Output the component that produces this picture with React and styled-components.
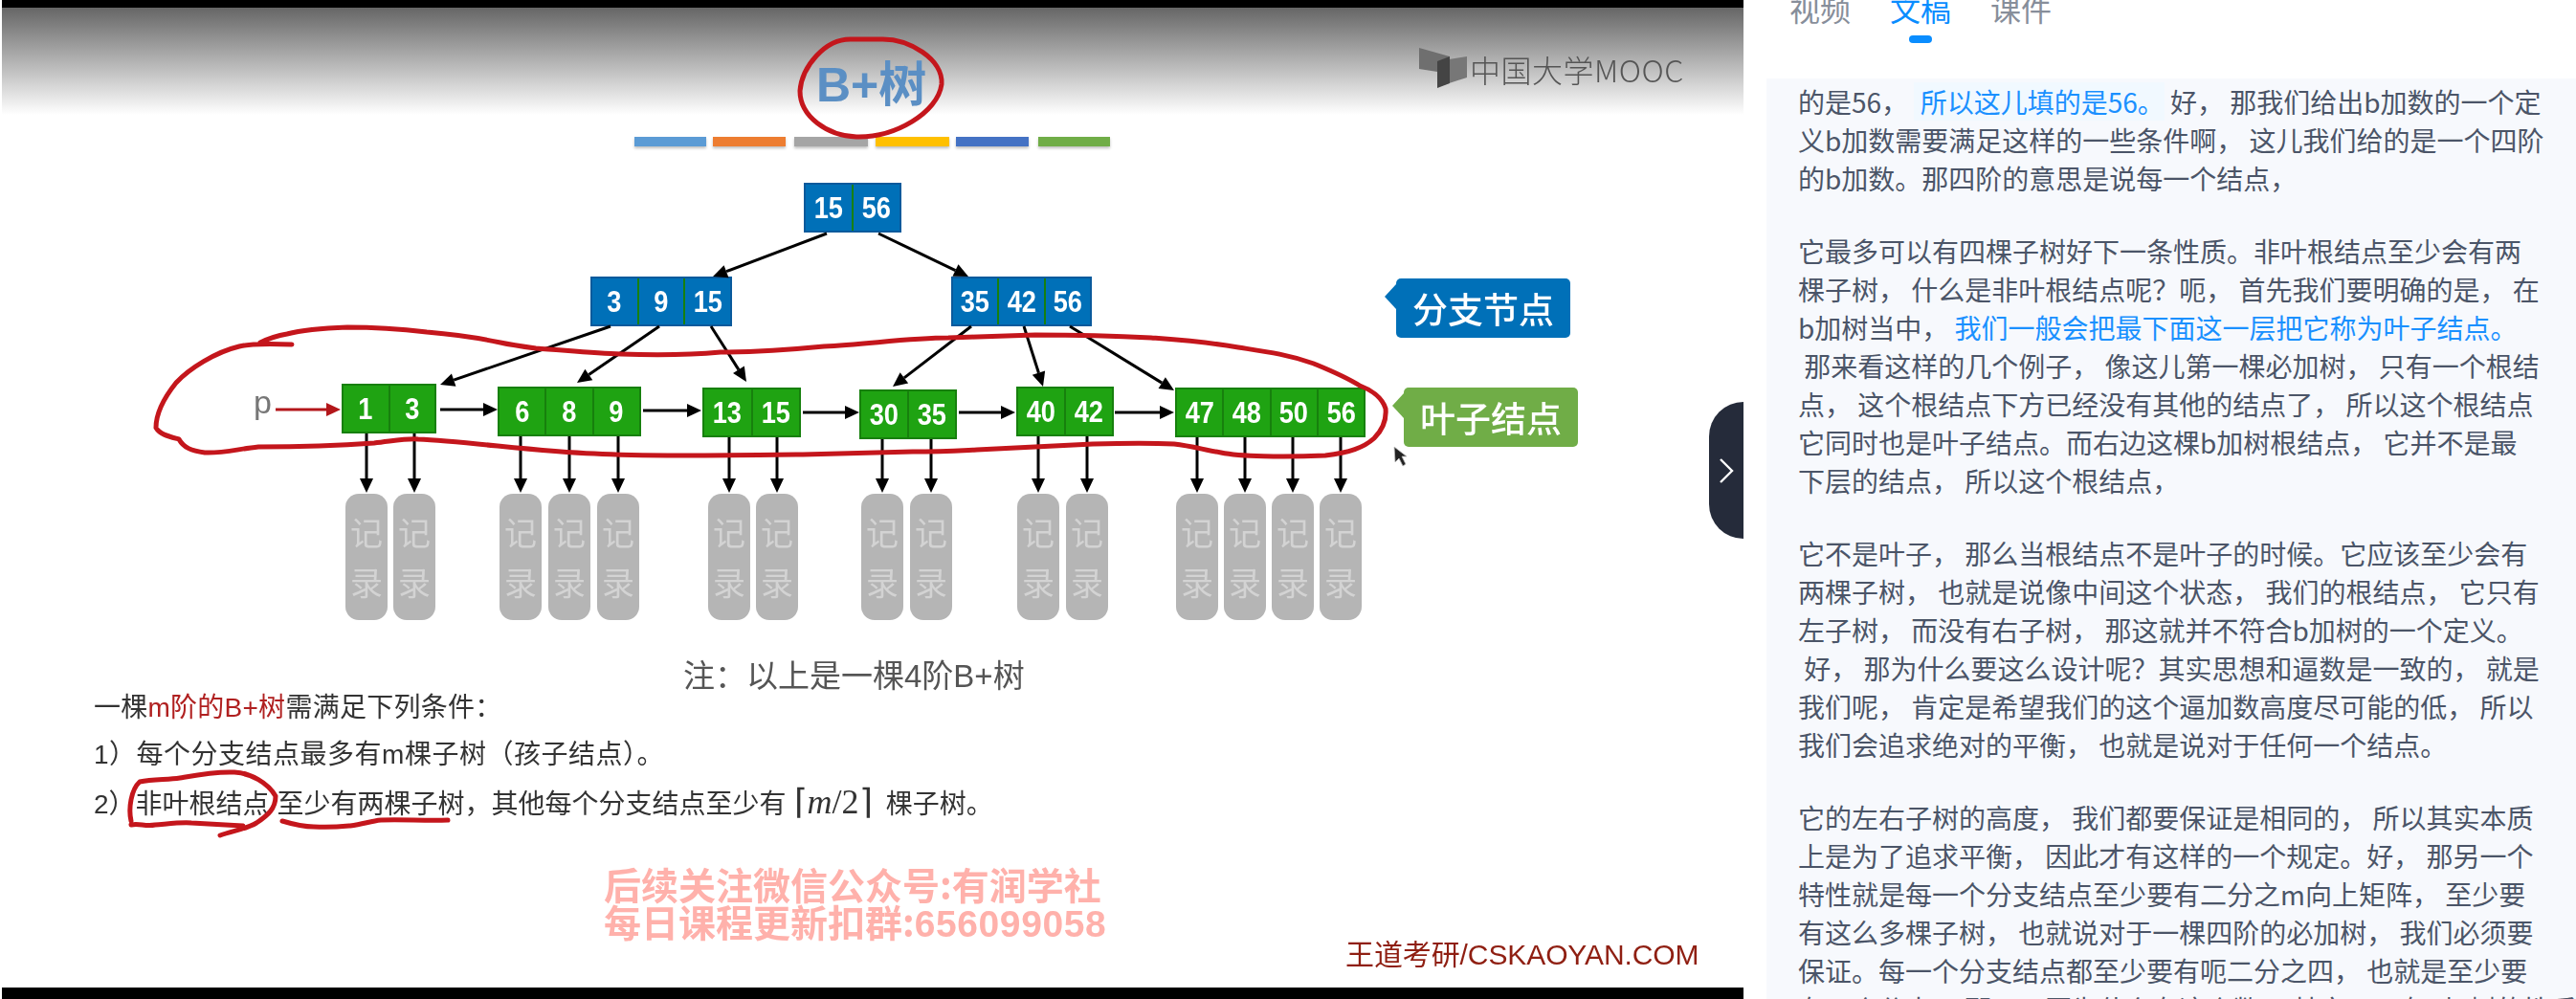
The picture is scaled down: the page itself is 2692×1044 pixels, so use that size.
import styled, { createGlobalStyle } from "styled-components";

const GlobalStyle = createGlobalStyle`
  html, body {
    margin: 0;
    padding: 0;
    background: #fff;
  }
  body {
    width: 2692px;
    height: 1044px;
    overflow: hidden;
    font-family: "Noto Sans CJK SC", "Liberation Sans", sans-serif;
  }
`;

const Page = styled.div`
  display: flex;
  width: 2692px;
  height: 1044px;
  overflow: hidden;
  background: #fff;
`;

const Player = styled.div`
  position: relative;
  flex: 0 0 1820px;
  margin-left: 2px;
  display: flex;
  flex-direction: column;
`;

const BlackBar = styled.div`
  flex: 0 0 ${(p) => p.$h}px;
  background: #000;
`;

const Slide = styled.div`
  position: relative;
  flex: 1;
  background: linear-gradient(#666 0, #fff 112px);
  filter: blur(0.6px);
  overflow: hidden;
`;

/* everything in the slide sits on a free canvas, y is measured from the top of the window */
const Title = styled.div`
  position: absolute;
  left: 851px;
  top: 51px;
  font: bold 50px/60px "Liberation Sans", "Noto Sans CJK SC", sans-serif;
  color: #5b8fc4;
`;

const Logo = styled.div`
  position: absolute;
  left: 1480px;
  top: 41px;
  display: flex;
  align-items: flex-start;
  gap: 2px;
`;

const LogoText = styled.span`
  margin-top: -1px;
  font-size: 32px;
  line-height: 48px;
  font-weight: 300;
  color: #555;
  letter-spacing: 0.5px;
`;

const ColorBar = styled.div`
  position: absolute;
  left: ${(p) => p.$x - 2}px;
  top: 135px;
  width: ${(p) => p.$w}px;
  height: 10px;
  background: ${(p) => p.$c};
  box-shadow: 0 2px 3px rgba(0, 0, 0, 0.25);
`;

const Node = styled.div`
  position: absolute;
  left: ${(p) => p.$x - 2}px;
  top: ${(p) => p.$y - 8}px;
  width: ${(p) => p.$w}px;
  height: 52px;
  box-sizing: border-box;
  display: flex;
  background: ${(p) => (p.$leaf ? "#1fa312" : "#0070b8")};
  border: 2px solid ${(p) => (p.$leaf ? "#17800d" : "#0a5a9c")};
`;

const Cell = styled.div`
  flex: 1;
  display: flex;
  align-items: center;
  justify-content: center;
  & + & {
    border-left: 2px solid ${(p) => (p.$leaf ? "#17800d" : "#0a5a9c")};
  }
`;

const Key = styled.span`
  font: bold 32px "Liberation Sans", sans-serif;
  color: #fff;
  transform: scaleX(0.85);
`;

const Record = styled.div`
  position: absolute;
  left: ${(p) => p.$x - 2}px;
  top: 508px;
  width: 44px;
  height: 132px;
  border-radius: 14px;
  background: #b5b5b5;
  display: flex;
  flex-direction: column;
  align-items: center;
  justify-content: center;
  gap: 18px;
  font-size: 34px;
  line-height: 34px;
  color: #d3d3d3;
`;

const Tag = styled.div`
  position: absolute;
  left: ${(p) => p.$x - 2}px;
  top: ${(p) => p.$y - 8}px;
  width: 182px;
  height: 62px;
  border-radius: 5px;
  background: ${(p) => p.$c};
  display: flex;
  align-items: center;
  justify-content: center;
  font-size: 37px;
  font-weight: 500;
  color: #fff;
  &::before {
    content: "";
    position: absolute;
    left: -12px;
    top: 6px;
    border-style: solid;
    border-width: 13px 12px 13px 0;
    border-color: transparent ${(p) => p.$c} transparent transparent;
  }
`;

const PLabel = styled.div`
  position: absolute;
  left: 263px;
  top: 392px;
  font: 34px/40px "Liberation Sans", sans-serif;
  color: #777;
`;

const Note = styled.div`
  position: absolute;
  left: 712px;
  top: 675px;
  font: 33px/48px "Liberation Sans", "Noto Sans CJK SC", sans-serif;
  color: #555;
  white-space: pre;
`;

const RuleList = styled.div`
  position: absolute;
  left: 96px;
  top: 708px;
  display: flex;
  flex-direction: column;
  gap: 1px;
  font-family: "Liberation Sans", "Noto Sans CJK SC", sans-serif;
  font-size: 28px;
  line-height: 48px;
  color: #333;
  white-space: pre;
`;

const Rule = styled.div`
  letter-spacing: ${(p) => p.$track || 0}px;
`;

const RedText = styled.span`
  color: #b02020;
`;

const Circled = styled.span`
  margin-right: 8px;
`;

const MathText = styled.span`
  font-family: "Liberation Serif", serif;
  font-size: 36px;
  margin: 0 14px 0 8px;
`;

const Watermark = styled.div`
  position: absolute;
  left: 629px;
  top: 896px;
  font-size: 39px;
  line-height: 39px;
  font-weight: 700;
  color: #ffb1ab;
  white-space: pre;
`;

const WatermarkNumber = styled.span`
  font-family: "Liberation Sans", sans-serif;
  letter-spacing: 0.6px;
`;

const Credit = styled.div`
  position: absolute;
  left: 1404px;
  top: 968px;
  font: 30px/44px "Liberation Sans", "Noto Sans CJK SC", sans-serif;
  letter-spacing: -0.1px;
  color: #8f1f12;
  white-space: pre;
`;

const Overlay = styled.svg`
  position: absolute;
  left: -2px;
  top: -8px;
  width: 1822px;
  height: 1044px;
  pointer-events: none;
`;

const Handle = styled.div`
  position: absolute;
  right: 0;
  top: 420px;
  width: 36px;
  height: 143px;
  border-radius: 36px 0 0 36px;
  background: #252b3a;
  display: flex;
  align-items: center;
  justify-content: center;
`;

const Side = styled.aside`
  position: relative;
  flex: 1;
  display: flex;
  flex-direction: column;
  min-width: 0;
`;

const Tabs = styled.div`
  flex: 0 0 82px;
  box-sizing: border-box;
  display: flex;
  gap: 41px;
  padding-left: 48px;
  overflow: hidden;
`;

const Tab = styled.div`
  position: relative;
  box-sizing: border-box;
  height: 64px;
  margin-top: -19px;
  padding-top: 5px;
  font-size: 32px;
  line-height: 44px;
  color: ${(p) => (p.$active ? "#0a8dff" : "#878e9a")};
  &::after {
    content: "";
    display: ${(p) => (p.$active ? "block" : "none")};
    position: absolute;
    left: 20px;
    bottom: 0;
    width: 24px;
    height: 8px;
    border-radius: 4px;
    background: #0a8dff;
  }
`;

const Transcript = styled.div`
  flex: 1;
  box-sizing: border-box;
  margin-left: 24px;
  padding: 4px 0 0 33px;
  background: #f7f9fd;
  overflow: hidden;
  font-size: 28px;
  line-height: 40px;
  color: #4b5568;
  white-space: pre;
`;

const Para = styled.p`
  margin: 0 0 36px;
`;

const Hot = styled.span`
  color: #1a90ff;
  background: ${(p) => (p.$bg ? "#f1f9ff" : "transparent")};
`;

const colorBars = [
  { x: 663, w: 75, c: "#5b9bd5" },
  { x: 745, w: 76, c: "#ed7d31" },
  { x: 830, w: 77, c: "#a5a5a5" },
  { x: 915, w: 77, c: "#ffc000" },
  { x: 999, w: 76, c: "#4472c4" },
  { x: 1085, w: 75, c: "#70ad47" },
];

const nodes = [
  { x: 840, y: 191, w: 102, keys: [15, 56] },
  { x: 617, y: 289, w: 148, keys: [3, 9, 15] },
  { x: 994, y: 289, w: 147, keys: [35, 42, 56] },
  { x: 357, y: 401, w: 99, keys: [1, 3], leaf: true },
  { x: 520, y: 404, w: 150, keys: [6, 8, 9], leaf: true },
  { x: 734, y: 405, w: 103, keys: [13, 15], leaf: true },
  { x: 898, y: 407, w: 102, keys: [30, 35], leaf: true },
  { x: 1062, y: 404, w: 102, keys: [40, 42], leaf: true },
  { x: 1228, y: 405, w: 199, keys: [47, 48, 50, 56], leaf: true },
];

// x of each record, and the y where its arrow starts under the leaf
const records = [
  { x: 361, y: 453 },
  { x: 411, y: 453 },
  { x: 522, y: 456 },
  { x: 573, y: 456 },
  { x: 624, y: 456 },
  { x: 740, y: 457 },
  { x: 790, y: 457 },
  { x: 900, y: 459 },
  { x: 951, y: 459 },
  { x: 1063, y: 456 },
  { x: 1114, y: 456 },
  { x: 1229, y: 457 },
  { x: 1279, y: 457 },
  { x: 1329, y: 457 },
  { x: 1379, y: 457 },
];

const arrows = [
  [864, 244, 745, 289],
  [918, 244, 1012, 289],
  [638, 341, 460, 402],
  [689, 341, 603, 400],
  [743, 341, 780, 399],
  [1015, 341, 933, 404],
  [1070, 341, 1090, 404],
  [1118, 341, 1227, 408],
  [460, 428, 520, 428],
  [672, 429, 733, 429],
  [839, 431, 898, 431],
  [1002, 431, 1061, 431],
  [1165, 431, 1227, 431],
];

const Arrow = ({ from, to, color = "#000", width = 3 }) => {
  const [x1, y1] = from;
  const [x2, y2] = to;
  const len = Math.hypot(x2 - x1, y2 - y1);
  const ux = (x2 - x1) / len;
  const uy = (y2 - y1) / len;
  const bx = x2 - ux * 15;
  const by = y2 - uy * 15;
  return (
    <>
      <line x1={x1} y1={y1} x2={bx} y2={by} stroke={color} strokeWidth={width} />
      <polygon
        points={`${x2},${y2} ${bx - uy * 7},${by + ux * 7} ${bx + uy * 7},${by - ux * 7}`}
        fill={color}
      />
    </>
  );
};

const INK = "#c4161c";

const Scribbles = () => (
  <Overlay viewBox="0 0 1822 1044">
    {arrows.map((a, i) => (
      <Arrow key={i} from={[a[0], a[1]]} to={[a[2], a[3]]} />
    ))}
    {records.map((r, i) => (
      <Arrow key={i} from={[r.x + 22, r.y]} to={[r.x + 22, 515]} />
    ))}
    <Arrow from={[288, 428]} to={[356, 428]} color="#b3161a" />
    <g fill="none" stroke={INK} strokeWidth="5" strokeLinecap="round" strokeLinejoin="round">
      <path d="M890 41 C862 40 838 70 836 95 C836 122 865 142 895 143 C935 144 980 118 984 88 C986 62 950 40 920 41 C908 41 898 41 890 41Z" />
      <path d="M305 360 C280 359 262 359 250 362 C225 368 198 385 184 400 C172 415 163 432 163 447 C167 454 176 456 187 459 C192 468 200 471 214 473 C232 474 250 469 270 467 C300 467 350 466 391 463 C410 461 425 458 437 459 C460 460 490 463 520 466 C560 470 590 473 621 474 C670 477 750 476 839 475 C890 474 925 473 954 472 C985 472 1000 471 1021 470 C1060 468 1100 466 1142 464 C1180 463 1205 463 1227 464 C1245 466 1258 470 1276 473 C1295 477 1340 478 1385 476 C1410 473 1425 468 1436 458 C1446 448 1449 438 1448 427 C1444 415 1432 407 1421 403 C1405 393 1390 387 1373 380 C1345 370 1320 367 1294 363 C1260 357 1230 355 1203 353 C1165 351 1120 350 1082 350 C1050 351 1020 352 991 353 C950 353 905 360 861 362 C820 366 780 368 753 368 C720 371 680 371 649 370 C620 369 590 366 560 364 C545 362 532 360 523 358 C495 352 470 349 446 347 C420 344 390 342 363 342 C335 343 315 345 300 349 C288 351 280 354 272 358" />
      <path d="M137 858 C134 845 137 825 146 817 C160 814 175 815 188 813 C205 810 225 806 245 807 C262 808 280 818 288 832 C288 845 280 852 268 860 C258 866 245 868 230 873" />
      <path d="M137 862 C145 860 152 864 162 862 C175 861 190 859 200 860 C215 861 235 862 254 863" />
      <path d="M295 858 C305 861 316 864 328 864 C345 865 355 864 366 863 C380 861 388 858 398 857 C420 856 445 858 468 857" />
    </g>
    <path d="M1457 467 L1458 483 L1462 479 L1466 487 L1469 485 L1465 477 L1470 477 Z" fill="#222" stroke="#bbb" strokeWidth="0.8" />
  </Overlay>
);

const MoocMark = () => (
  <svg width="52" height="46" viewBox="0 0 52 46">
    <path d="M1 1 L33 10 L33 28 L1 23 Z" fill="#6f6f6f" />
    <path d="M20 15 L51 10 L51 32 L20 42 Z" fill="#777" />
    <path d="M20 15 L33 10 L33 38 L20 43 Z" fill="#444" />
  </svg>
);

const App = () => {
  return (
    <Page>
      <GlobalStyle />
      <Player>
        <BlackBar $h={8} />
        <Slide>
          <Title>B+树</Title>
          <Logo>
            <MoocMark />
            <LogoText>中国大学MOOC</LogoText>
          </Logo>
          {colorBars.map((b) => (
            <ColorBar key={b.x} $x={b.x} $w={b.w} $c={b.c} />
          ))}
          {nodes.map((n) => (
            <Node key={n.x} $x={n.x} $y={n.y} $w={n.w} $leaf={n.leaf}>
              {n.keys.map((k) => (
                <Cell key={k} $leaf={n.leaf}>
                  <Key>{k}</Key>
                </Cell>
              ))}
            </Node>
          ))}
          {records.map((r) => (
            <Record key={r.x} $x={r.x}>
              <span>记</span>
              <span>录</span>
            </Record>
          ))}
          <Tag $x={1459} $y={291} $c="#0070b8">
            分支节点
          </Tag>
          <Tag $x={1467} $y={405} $c="#70ad47">
            叶子结点
          </Tag>
          <PLabel>p</PLabel>
          <Note>注：以上是一棵4阶B+树</Note>
          <RuleList>
            <Rule $track={0.25}>
              一棵<RedText>m阶的B+树</RedText>需满足下列条件：
            </Rule>
            <Rule $track={0.5}>1）每个分支结点最多有m棵子树（孩子结点）。</Rule>
            <Rule>
              2）<Circled>非叶根结点</Circled>至少有两棵子树，其他每个分支结点至少有
              <MathText>
                ⌈<i>m</i>/2⌉
              </MathText>
              棵子树。
            </Rule>
          </RuleList>
          <Watermark>
            后续关注微信公众号:有润学社
            {"\n"}
            每日课程更新扣群:<WatermarkNumber>656099058</WatermarkNumber>
          </Watermark>
          <Credit>王道考研/CSKAOYAN.COM</Credit>
          <Scribbles />
        </Slide>
        <BlackBar $h={12} />
        <Handle>
          <svg width="16" height="32" viewBox="0 0 16 32">
            <path d="M2 4 L14 16 L2 28" fill="none" stroke="#fff" strokeWidth="2.4" />
          </svg>
        </Handle>
      </Player>
      <Side>
        <Tabs>
          <Tab>视频</Tab>
          <Tab $active>文稿</Tab>
          <Tab>课件</Tab>
        </Tabs>
        <Transcript>
          <Para>
            的是56， <Hot $bg> 所以这儿填的是56。</Hot> 好， 那我们给出b加数的一个定{"\n"}
            义b加数需要满足这样的一些条件啊， 这儿我们给的是一个四阶{"\n"}
            的b加数。那四阶的意思是说每一个结点，
          </Para>
          <Para>
            它最多可以有四棵子树好下一条性质。非叶根结点至少会有两{"\n"}
            棵子树， 什么是非叶根结点呢？呃， 首先我们要明确的是， 在{"\n"}
            b加树当中， <Hot>我们一般会把最下面这一层把它称为叶子结点。</Hot>{"\n"}
            {" "}那来看这样的几个例子， 像这儿第一棵必加树， 只有一个根结{"\n"}
            点， 这个根结点下方已经没有其他的结点了， 所以这个根结点{"\n"}
            它同时也是叶子结点。而右边这棵b加树根结点， 它并不是最{"\n"}
            下层的结点， 所以这个根结点，
          </Para>
          <Para>
            它不是叶子， 那么当根结点不是叶子的时候。它应该至少会有{"\n"}
            两棵子树， 也就是说像中间这个状态， 我们的根结点， 它只有{"\n"}
            左子树， 而没有右子树， 那这就并不符合b加树的一个定义。{"\n"}
            {" "}好， 那为什么要这么设计呢？其实思想和逼数是一致的， 就是{"\n"}
            我们呢， 肯定是希望我们的这个逼加数高度尽可能的低， 所以{"\n"}
            我们会追求绝对的平衡， 也就是说对于任何一个结点。
          </Para>
          <Para>
            它的左右子树的高度， 我们都要保证是相同的， 所以其实本质{"\n"}
            上是为了追求平衡， 因此才有这样的一个规定。好， 那另一个{"\n"}
            特性就是每一个分支结点至少要有二分之m向上矩阵， 至少要{"\n"}
            有这么多棵子树， 也就说对于一棵四阶的必加树， 我们必须要{"\n"}
            保证。每一个分支结点都至少要有呃二分之四， 也就是至少要{"\n"}
            有两个分支。 那下面因为什么有这个数， 其实下面有b加树的性质
          </Para>
        </Transcript>
      </Side>
    </Page>
  );
};

export default App;
